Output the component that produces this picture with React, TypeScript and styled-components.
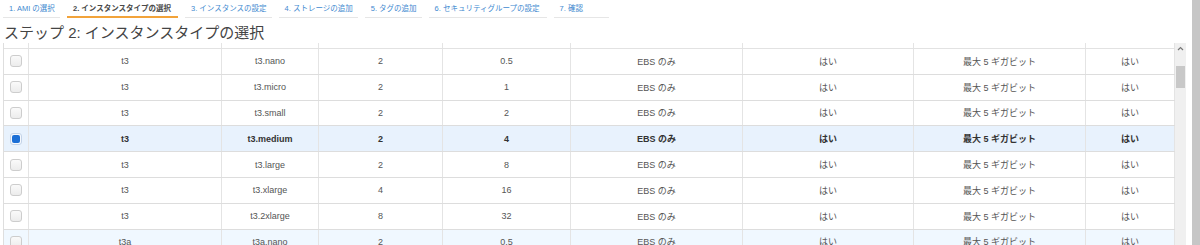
import styled, { createGlobalStyle } from 'styled-components';

const GlobalStyle = createGlobalStyle`
  html, body {
    margin: 0;
    padding: 0;
    background: #fff;
  }

  body {
    font-family: 'Liberation Sans', 'Noto Sans CJK JP', sans-serif;
  }
`;

const Page = styled.div`
  width: 1200px;
  height: 245px;
  overflow: hidden;
  display: flex;
`;

const Main = styled.main`
  flex: 1;
  padding: 0 6px 0 3px;
  display: flex;
  flex-direction: column;
  min-width: 0;
`;

const PageScroll = styled.div`
  width: 8px;
  background-color: #c6c6c6;
`;

const Tabs = styled.nav`
  display: flex;
  gap: 7px;
  height: 18px;
`;

const Tab = styled.div<{ $active?: boolean; $width: number }>`
  box-sizing: border-box;
  flex: none;
  min-width: ${(p) => p.$width}px;
  height: 18px;
  padding: 3px 5px 0 6px;
  font-size: 7.5px;
  line-height: 11px;
  white-space: nowrap;
  color: ${(p) => (p.$active ? '#4a4a4a' : '#3f8ad0')};
  font-weight: ${(p) => (p.$active ? 600 : 400)};
  border-bottom: ${(p) => (p.$active ? '2px solid #f2a33a' : '1px solid #e6e6e6')};
`;

const Heading = styled.h1`
  margin: 6px 0 0 1px;
  height: 19px;
  font-size: 15px;
  line-height: 18px;
  font-weight: 400;
  color: #444;
`;

const TableArea = styled.div`
  flex: 1;
  display: flex;
  min-height: 0;
  overflow: hidden;
`;

const Table = styled.div`
  width: 1172px;
  box-sizing: border-box;
  border-left: 1px solid #dedede;
  display: flex;
  flex-direction: column;
`;

const columns = '25px 193px 97px 124px 128px 172px 171px 172px 89px';

const HeadStrip = styled.div`
  display: grid;
  grid-template-columns: ${columns};
  height: 5px;
  flex: none;
  border-bottom: 1.5px solid #e2e2e2;
`;

const HeadCell = styled.div`
  border-right: 1px solid #e4e4e4;
`;

const Row = styled.div<{ $selected?: boolean; $tint?: boolean }>`
  display: grid;
  grid-template-columns: ${columns};
  flex: none;
  box-sizing: border-box;
  height: 25.8px;
  border-bottom: 1px solid #dddddd;
  background-color: ${(p) => (p.$selected ? '#e8f2fd' : p.$tint ? '#f0f8ff' : '#fff')};
  color: ${(p) => (p.$selected ? '#333' : '#555')};
  font-weight: ${(p) => (p.$selected ? 700 : 400)};
`;

const Cell = styled.div`
  display: flex;
  align-items: center;
  justify-content: center;
  border-right: 1px solid #e4e4e4;
  font-size: 9px;
  white-space: nowrap;
`;

const Check = styled.span<{ $checked?: boolean }>`
  box-sizing: border-box;
  width: 12px;
  height: 12px;
  border-radius: 3px;
  border: 1px solid ${(p) => (p.$checked ? '#c3d3e8' : '#cdcdcd')};
  background: ${(p) => (p.$checked ? '#f6f9fd' : 'linear-gradient(#fafafa, #ececec)')};
  display: flex;
  align-items: center;
  justify-content: center;

  &::after {
    content: '';
    display: ${(p) => (p.$checked ? 'block' : 'none')};
    width: 8px;
    height: 8px;
    border-radius: 2px;
    background-color: #1b6fd6;
  }
`;

const InnerScroll = styled.div`
  width: 11px;
  background-color: #f0f0f0;
  display: flex;
  flex-direction: column;
  align-items: center;
`;

const ScrollArrow = styled.svg`
  margin-top: 3px;
  width: 7px;
  height: 5px;
`;

const ScrollThumb = styled.div`
  margin-top: 15px;
  width: 9px;
  height: 22px;
  background-color: #c8c8c8;
`;

const steps = [
  { label: '1. AMI の選択', width: 57 },
  { label: '2. インスタンスタイプの選択', width: 111 },
  { label: '3. インスタンスの設定', width: 83 },
  { label: '4. ストレージの追加', width: 72 },
  { label: '5. タグの追加', width: 55 },
  { label: '6. セキュリティグループの設定', width: 118 },
  { label: '7. 確認', width: 55 },
];

type Instance = {
  family: string;
  type: string;
  vcpu: number;
  memory: string;
  selected?: boolean;
  tint?: boolean;
};

const instances: Instance[] = [
  { family: 't3', type: 't3.nano', vcpu: 2, memory: '0.5' },
  { family: 't3', type: 't3.micro', vcpu: 2, memory: '1' },
  { family: 't3', type: 't3.small', vcpu: 2, memory: '2' },
  { family: 't3', type: 't3.medium', vcpu: 2, memory: '4', selected: true },
  { family: 't3', type: 't3.large', vcpu: 2, memory: '8' },
  { family: 't3', type: 't3.xlarge', vcpu: 4, memory: '16' },
  { family: 't3', type: 't3.2xlarge', vcpu: 8, memory: '32' },
  { family: 't3a', type: 't3a.nano', vcpu: 2, memory: '0.5', tint: true },
];

export default function App() {
  return (
    <Page>
      <GlobalStyle />
      <Main>
        <Tabs>
          {steps.map((step, i) => (
            <Tab key={step.label} $active={i === 1} $width={step.width}>
              {step.label}
            </Tab>
          ))}
        </Tabs>

        <Heading>ステップ 2: インスタンスタイプの選択</Heading>

        <TableArea>
          <Table>
            <HeadStrip>
              {Array.from({ length: 9 }).map((_, i) => (
                <HeadCell key={i} />
              ))}
            </HeadStrip>

            {instances.map((row) => (
              <Row key={row.type} $selected={row.selected} $tint={row.tint}>
                <Cell>
                  <Check $checked={row.selected} />
                </Cell>
                <Cell>{row.family}</Cell>
                <Cell>{row.type}</Cell>
                <Cell>{row.vcpu}</Cell>
                <Cell>{row.memory}</Cell>
                <Cell>EBS のみ</Cell>
                <Cell>はい</Cell>
                <Cell>最大 5 ギガビット</Cell>
                <Cell>はい</Cell>
              </Row>
            ))}
          </Table>

          <InnerScroll>
            <ScrollArrow viewBox='0 0 7 5'>
              <path d='M1 4 L3.5 1.5 L6 4' fill='none' stroke='#777' strokeWidth='1.2' />
            </ScrollArrow>
            <ScrollThumb />
          </InnerScroll>
        </TableArea>
      </Main>
      <PageScroll />
    </Page>
  );
}
